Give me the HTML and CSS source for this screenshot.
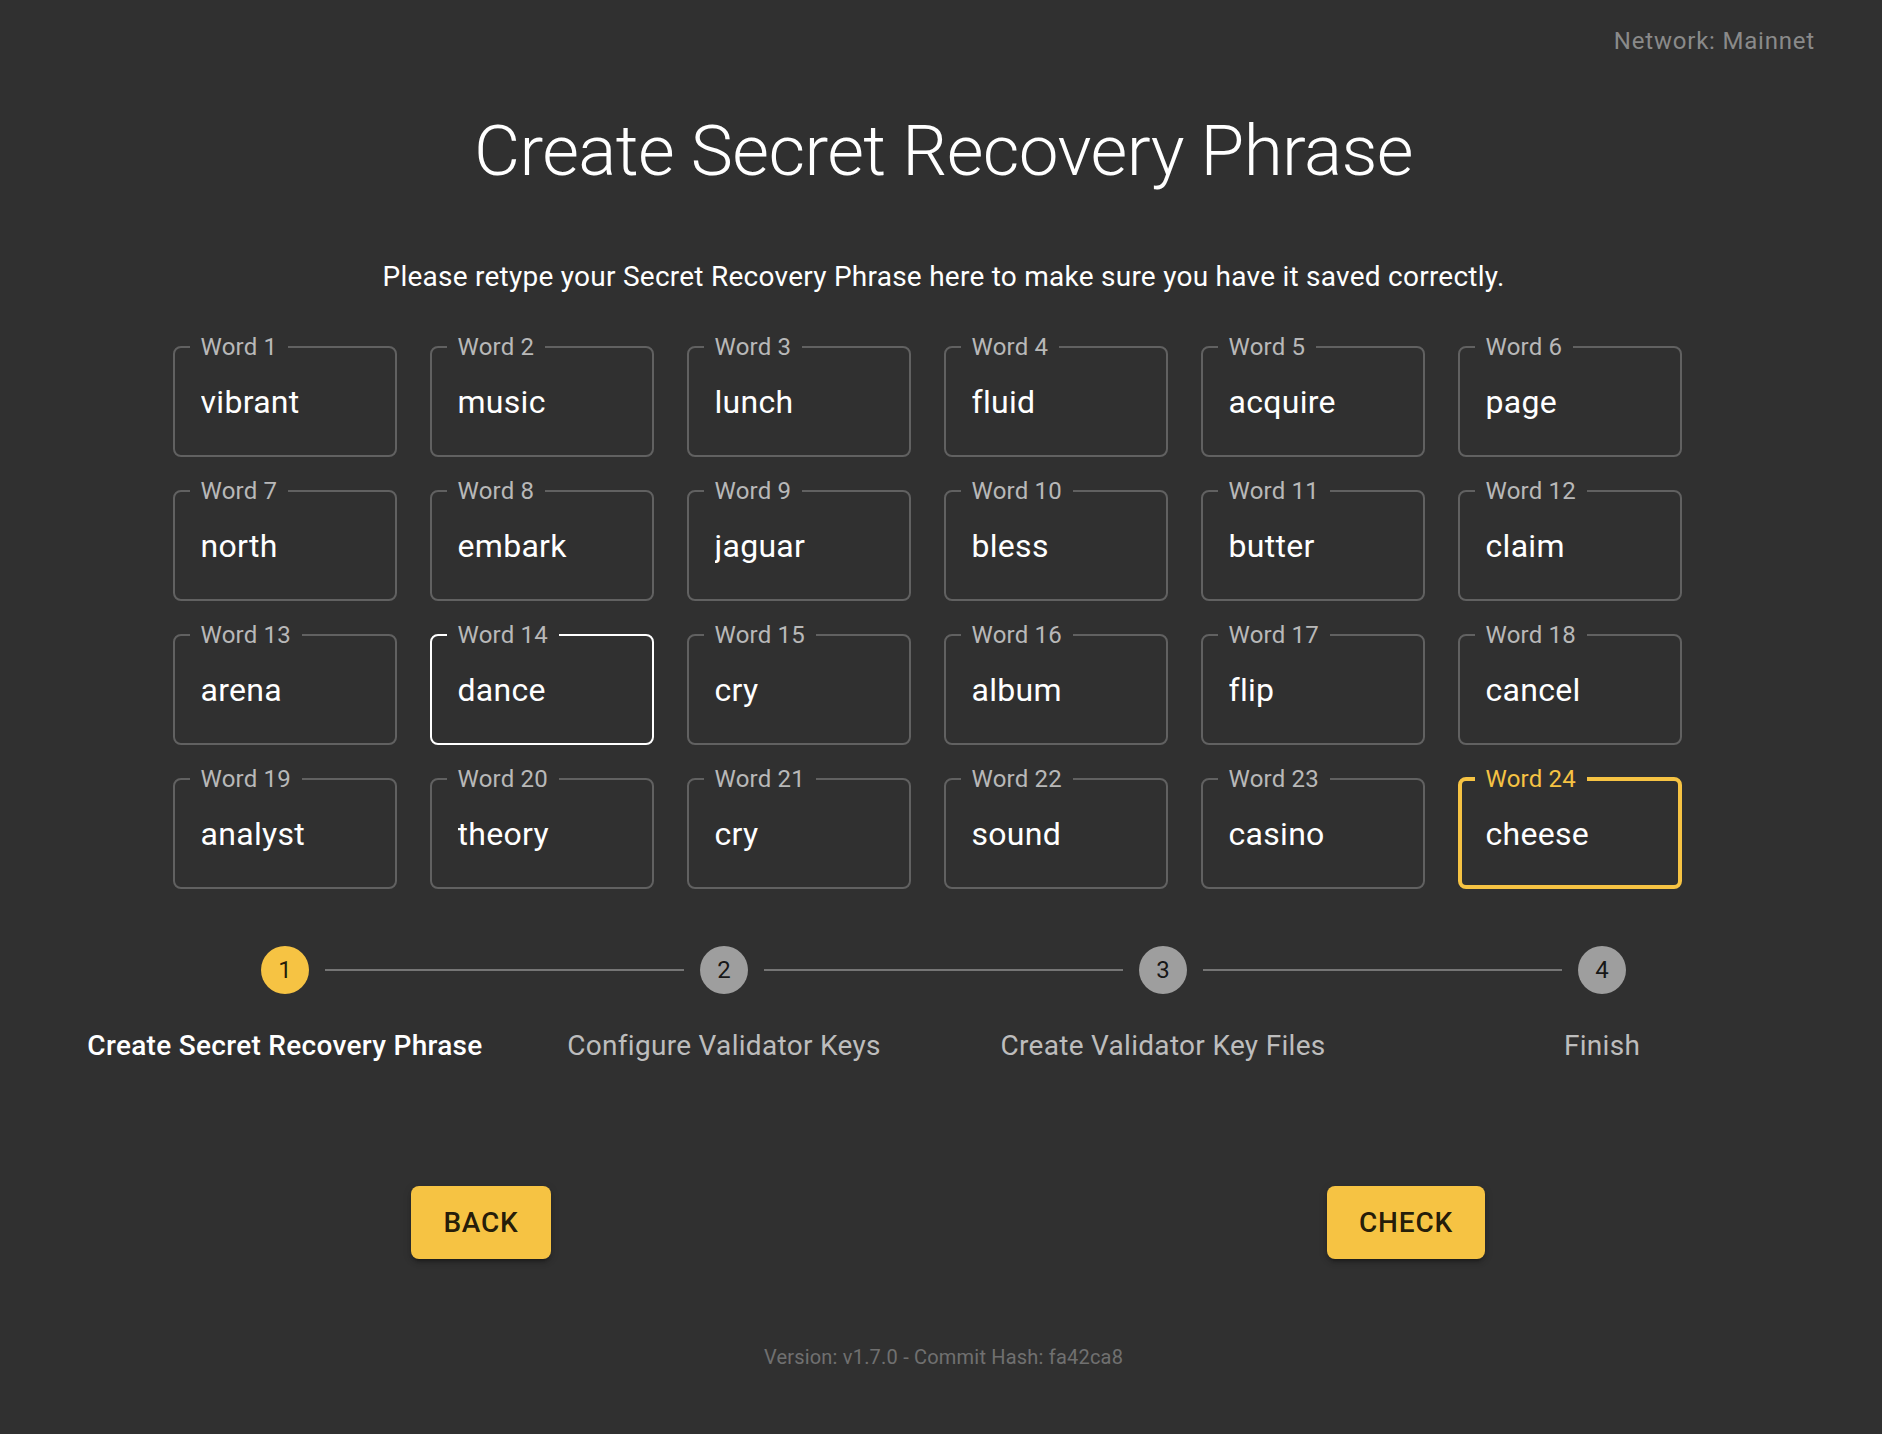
FILE: index.html
```html
<!DOCTYPE html>
<html lang="en">
<head>
    <meta charset="UTF-8">
    <meta name="viewport" content="width=device-width, initial-scale=1.0">
    <title>Create Secret Recovery Phrase</title>
    <link rel="stylesheet" href="styles.css">
</head>
<body>
    <header class="topbar">
        <span class="network">Network: Mainnet</span>
    </header>

    <main class="content">
        <h1 class="title">Create Secret Recovery Phrase</h1>
        <p class="subtitle">Please retype your Secret Recovery Phrase here to make sure you have it saved correctly.</p>

        <div class="words">
            <fieldset class="word"><legend>Word 1</legend><input type="text" value="vibrant"></fieldset>
            <fieldset class="word"><legend>Word 2</legend><input type="text" value="music"></fieldset>
            <fieldset class="word"><legend>Word 3</legend><input type="text" value="lunch"></fieldset>
            <fieldset class="word"><legend>Word 4</legend><input type="text" value="fluid"></fieldset>
            <fieldset class="word"><legend>Word 5</legend><input type="text" value="acquire"></fieldset>
            <fieldset class="word"><legend>Word 6</legend><input type="text" value="page"></fieldset>

            <fieldset class="word"><legend>Word 7</legend><input type="text" value="north"></fieldset>
            <fieldset class="word"><legend>Word 8</legend><input type="text" value="embark"></fieldset>
            <fieldset class="word"><legend>Word 9</legend><input type="text" value="jaguar"></fieldset>
            <fieldset class="word"><legend>Word 10</legend><input type="text" value="bless"></fieldset>
            <fieldset class="word"><legend>Word 11</legend><input type="text" value="butter"></fieldset>
            <fieldset class="word"><legend>Word 12</legend><input type="text" value="claim"></fieldset>

            <fieldset class="word"><legend>Word 13</legend><input type="text" value="arena"></fieldset>
            <fieldset class="word hover"><legend>Word 14</legend><input type="text" value="dance"></fieldset>
            <fieldset class="word"><legend>Word 15</legend><input type="text" value="cry"></fieldset>
            <fieldset class="word"><legend>Word 16</legend><input type="text" value="album"></fieldset>
            <fieldset class="word"><legend>Word 17</legend><input type="text" value="flip"></fieldset>
            <fieldset class="word"><legend>Word 18</legend><input type="text" value="cancel"></fieldset>

            <fieldset class="word"><legend>Word 19</legend><input type="text" value="analyst"></fieldset>
            <fieldset class="word"><legend>Word 20</legend><input type="text" value="theory"></fieldset>
            <fieldset class="word"><legend>Word 21</legend><input type="text" value="cry"></fieldset>
            <fieldset class="word"><legend>Word 22</legend><input type="text" value="sound"></fieldset>
            <fieldset class="word"><legend>Word 23</legend><input type="text" value="casino"></fieldset>
            <fieldset class="word focused"><legend>Word 24</legend><input type="text" value="cheese"></fieldset>
        </div>

        <ol class="stepper">
            <li class="step active">
                <div class="step-track"><span class="line"></span><span class="step-icon">1</span><span class="line"></span></div>
                <span class="step-label">Create Secret Recovery Phrase</span>
            </li>
            <li class="step">
                <div class="step-track"><span class="line"></span><span class="step-icon">2</span><span class="line"></span></div>
                <span class="step-label">Configure Validator Keys</span>
            </li>
            <li class="step">
                <div class="step-track"><span class="line"></span><span class="step-icon">3</span><span class="line"></span></div>
                <span class="step-label">Create Validator Key Files</span>
            </li>
            <li class="step">
                <div class="step-track"><span class="line"></span><span class="step-icon">4</span><span class="line"></span></div>
                <span class="step-label">Finish</span>
            </li>
        </ol>

        <div class="actions">
            <button class="btn">Back</button>
            <button class="btn">Check</button>
        </div>

        <footer class="version">Version: v1.7.0 - Commit Hash: fa42ca8</footer>
    </main>
</body>
</html>
```

FILE: styles.css
```css
body {
    margin: 0;
    background-color: #303030;
    color: #fff;
    font-family: Roboto, "Noto Sans", sans-serif;
}
.topbar {
    display: flex;
    justify-content: flex-end;
    padding: 23px 67px 0;
}
.network {
    font-size: 24px;
    line-height: 36px;
    color: #8a8a8a;
    letter-spacing: 0.8px;
}
.content {
    display: flex;
    flex-direction: column;
    align-items: center;
    padding-left: 5px;
}
.title {
    margin: 49px 0 0;
    font-size: 71px;
    font-weight: 300;
    line-height: 86px;
    letter-spacing: -0.6px;
}
.subtitle {
    margin: 65px 0 0;
    font-size: 28px;
    line-height: 36px;
    letter-spacing: 0.25px;
}

/* word grid */
.words {
    margin-top: 40px;
    display: grid;
    grid-template-columns: repeat(6, 224px);
    column-gap: 33px;
    row-gap: 22px;
    padding-right: 33px;
}
.word {
    box-sizing: border-box;
    margin: 0;
    min-width: 0;
    padding: 0 15px 10px;
    border: 2px solid #616161;
    border-radius: 8px;
}
.word legend {
    padding: 0 11px;
    font-size: 24px;
    line-height: 24px;
    letter-spacing: 0.2px;
    color: #b8b8b8;
}
.word input {
    display: block;
    box-sizing: border-box;
    width: 100%;
    height: 86px;
    padding: 0 11px;
    border: none;
    outline: none;
    background: transparent;
    color: #fff;
    font-family: Roboto, "Noto Sans", sans-serif;
    font-size: 32px;
    letter-spacing: 0.3px;
}
.word.hover {
    border-color: #fff;
}
.word.focused {
    border: 4px solid #f6c343;
    padding: 0 13px 8px;
}
.word.focused legend {
    color: #f6c343;
}

/* stepper */
.stepper {
    list-style: none;
    margin: 57px 0 0;
    padding: 0;
    display: grid;
    grid-template-columns: repeat(4, 439px);
}
.step {
    display: flex;
    flex-direction: column;
    align-items: center;
}
.step-track {
    display: flex;
    align-items: center;
    width: 100%;
}
.line {
    flex: 1;
    height: 2px;
    background-color: #757575;
}
.line:first-child {
    margin-right: 16px;
}
.line:last-child {
    margin-left: 16px;
}
.step:first-child .line:first-child,
.step:last-child .line:last-child {
    visibility: hidden;
}
.step-icon {
    width: 48px;
    height: 48px;
    border-radius: 50%;
    background-color: #9e9e9e;
    color: rgba(0, 0, 0, 0.87);
    display: flex;
    align-items: center;
    justify-content: center;
    font-size: 24px;
}
.step.active .step-icon {
    background-color: #f6c343;
}
.step-label {
    margin-top: 32px;
    font-size: 28px;
    line-height: 40px;
    letter-spacing: 0.3px;
    color: #bdbdbd;
    white-space: nowrap;
}
.step.active .step-label {
    color: #fff;
    font-weight: 500;
}

/* buttons */
.actions {
    margin-top: 120px;
    width: 1850px;
    display: grid;
    grid-template-columns: 1fr 1fr;
    justify-items: center;
}
.btn {
    font-family: Roboto, "Noto Sans", sans-serif;
    font-size: 28px;
    font-weight: 500;
    line-height: 49px;
    letter-spacing: 0.8px;
    text-transform: uppercase;
    padding: 12px 32px;
    border: none;
    border-radius: 8px;
    background-color: #f6c343;
    color: rgba(0, 0, 0, 0.87);
    box-shadow: 0 6px 2px -4px rgba(0, 0, 0, 0.2), 0 4px 4px 0 rgba(0, 0, 0, 0.14), 0 2px 10px 0 rgba(0, 0, 0, 0.12);
    cursor: pointer;
}

.version {
    margin-top: 84px;
    font-size: 20px;
    line-height: 28px;
    letter-spacing: 0.2px;
    color: #707070;
}
```
